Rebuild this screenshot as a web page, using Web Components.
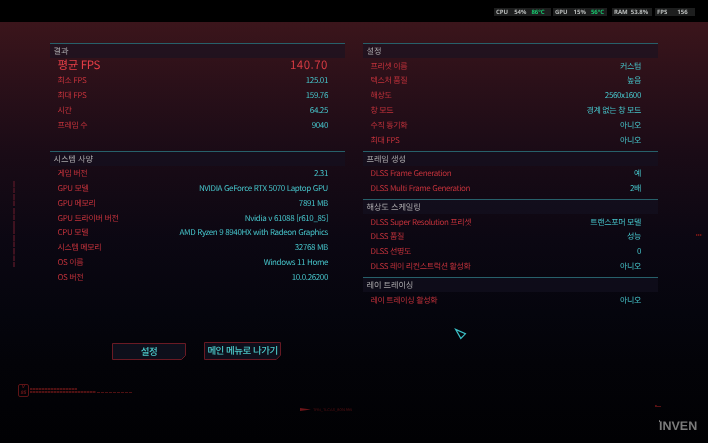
<!doctype html>
<html lang="ko"><head><meta charset="utf-8"><title>결과</title>
<style>
html,body{margin:0;background:#000}
body{width:708px;height:443px;overflow:hidden;font-family:"Noto Sans CJK KR","Noto Sans",sans-serif;text-rendering:geometricPrecision}
</style></head><body>
<template id="t-screen"><style>
:host{display:flex;flex-direction:column;width:708px;height:443px;position:relative;overflow:hidden;background:#000;filter:blur(.3px)}
.main{flex:1;min-height:0;display:flex;flex-direction:column;padding:21px 0 0 50px;background:linear-gradient(180deg,#3b151b 0,#2b1019 60px,#1a0b16 130px,#0b0712 220px,#05050d 290px,#030308 340px,#010103 421px)}
.cols{display:grid;grid-template-columns:295px 295px;column-gap:18px}
.btns{display:flex;gap:18px;padding-left:62px;margin-top:auto;margin-bottom:83px;align-items:flex-end}
</style><slot name="top"></slot><div class="main"><div class="cols"><slot name="left"></slot><slot name="right"></slot></div><div class="btns"><slot name="btn"></slot></div></div><slot></slot></template>

<template id="t-hud"><style>
:host{display:flex;height:22px;box-sizing:border-box;padding:8px 13px 0 494px;background:#000}
</style><slot></slot></template>

<template id="t-chip"><style>
:host{display:flex;height:8px;box-sizing:border-box;background:#1d1e1e;color:#b9bcbb;font:700 6px/8px "Noto Sans",sans-serif;padding:0 0 0 2px;white-space:nowrap;width:var(--w);gap:var(--g,5px);margin-left:var(--m,0)}
::slotted(b){color:#18c46d;font-weight:700}
</style><slot></slot></template>

<template id="t-sec"><style>
:host{display:block;margin-bottom:3.8px}
.h{height:15px;box-sizing:border-box;border-top:1.2px solid #27606a;background:rgba(20,18,34,.55);color:#a8a6a9;font-size:8.2px;letter-spacing:-.1px;line-height:15px;padding-left:3.5px}
:host([gap]){margin-bottom:18.6px}
</style><div class="h"><slot name="title"></slot></div><slot></slot></template>

<template id="t-row"><style>
:host{display:flex;justify-content:space-between;align-items:center;box-sizing:border-box;height:14.8px;padding:1.6px 17px 0 7.5px;font-size:8px;letter-spacing:-.37px;line-height:13px;color:#c2323b;white-space:nowrap}
::slotted([slot=v]){color:#46c4ca}
:host([big]){font-size:11.5px;letter-spacing:-.4px;color:#e63e47;padding-top:0;line-height:14.8px}
:host([big]) ::slotted([slot=v]){color:#d43a42;letter-spacing:.5px}
</style><span><slot></slot></span><slot name="v"></slot></template>

<template id="t-btn"><style>
:host{display:flex;align-items:center;justify-content:center;position:relative;box-sizing:border-box;width:var(--w);height:var(--h);color:#4ccacb;font-size:9.5px;letter-spacing:-.5px;font-weight:500;line-height:1;white-space:nowrap}
svg{position:absolute;inset:0;width:100%;height:100%}
span{position:relative}
</style><svg viewBox="0 0 74 17" preserveAspectRatio="none"><path d="M.5 .5H73.5V12.5L69.5 16.5H.5Z" fill="#0e0f1b" stroke="#6a1a24" vector-effect="non-scaling-stroke"/></svg><span><slot></slot></span></template>

<template id="t-deco"><style>
:host{position:absolute;inset:0;pointer-events:none;display:block}
.a{position:absolute}
.strip{left:12.5px;top:181px;width:2px;height:86px;background:repeating-linear-gradient(180deg,#3f1220 0 6px,#240c16 6px 7px,#3f1220 7px 12px,#0b0712 12px 13.5px)}
.badge{left:18px;top:384px;width:11px;height:13px;border:1px solid #5e1416;border-radius:2px;box-sizing:border-box;color:#6a1719;font:700 5px/5.5px "Liberation Sans",sans-serif;text-align:center;font-style:italic}
.l1{left:30px;top:388px;width:47px;height:1.5px;background:repeating-linear-gradient(90deg,#4e1113 0 2px,#2b0a0b 2px 3px)}
.l2{left:30px;top:391px;width:66px;height:1.5px;background:repeating-linear-gradient(90deg,#4e1113 0 2px,#2b0a0b 2px 3px)}
.l3{left:97px;top:391.5px;width:35px;height:1px;background:repeating-linear-gradient(90deg,#4e1113 0 3px,#0a0202 3px 4px)}
.arrow{left:300px;top:408px;width:11px;height:3px;background:#6d1518;clip-path:polygon(0 0,100% 50%,0 100%)}
.trn{left:313px;top:406.5px;font:3.8px/6px "Liberation Sans",sans-serif;color:#551214;white-space:nowrap}
.r1{left:696px;top:234px;width:6px;height:2px;background:repeating-linear-gradient(90deg,#6d1518 0 1px,#32090b 1px 2px)}
.r2{left:655px;top:405px;width:6px;height:2px;background:#5a1113;clip-path:polygon(0 0,30% 0,30% 50%,100% 50%,100% 100%,0 100%)}
.inv{left:659px;top:418px;font:700 12.5px/16px "Liberation Sans",sans-serif;color:#7b7b7b}
.dot{left:658.5px;top:420px;width:1.6px;height:1.6px;background:#8a8a8a;border-radius:50%}
svg{left:454px;top:328px}
</style>
<div class="a strip"></div>
<div class="a badge">V<br>85</div><div class="a l1"></div><div class="a l2"></div><div class="a l3"></div>
<div class="a arrow"></div><div class="a trn">TRN_TLCAS_8091995</div>
<div class="a r1"></div><div class="a r2"></div>
<svg class="a" width="14" height="13" viewBox="0 0 14 13"><path d="M1.6 1.4L11.4 5.8 6.8 10.4Z" fill="none" stroke="#3cc0c6" stroke-width="1.2"/></svg>
<div class="a inv">INVEN</div><div class="a dot"></div>
</template>

<result-screen>
  <hud-bar slot="top">
    <hud-chip style="--w:57px">CPU<span style="margin-left:1px">54%</span><b>86°C</b></hud-chip>
    <hud-chip style="--w:54px;--m:2px">GPU<span style="margin-left:1px">15%</span><b>56°C</b></hud-chip>
    <hud-chip style="--w:40px;--g:3px;--m:5px">RAM<span>53.8%</span></hud-chip>
    <hud-chip style="--w:40px;--g:10px;--m:3px">FPS<span>156</span></hud-chip>
  </hud-bar>
  <div slot="left">
    <stat-section gap><span slot="title">결과</span>
      <stat-row big>평균 FPS<span slot="v">140.70</span></stat-row>
      <stat-row>최소 FPS<span slot="v">125.01</span></stat-row>
      <stat-row>최대 FPS<span slot="v">159.76</span></stat-row>
      <stat-row>시간<span slot="v">64.25</span></stat-row>
      <stat-row>프레임 수<span slot="v">9040</span></stat-row>
    </stat-section>
    <stat-section><span slot="title">시스템 사양</span>
      <stat-row>게임 버전<span slot="v">2.31</span></stat-row>
      <stat-row>GPU 모델<span slot="v">NVIDIA GeForce RTX 5070 Laptop GPU</span></stat-row>
      <stat-row>GPU 메모리<span slot="v">7891 MB</span></stat-row>
      <stat-row>GPU 드라이버 버전<span slot="v">Nvidia v 61088 [r610_85]</span></stat-row>
      <stat-row>CPU 모델<span slot="v">AMD Ryzen 9 8940HX with Radeon Graphics</span></stat-row>
      <stat-row>시스템 메모리<span slot="v">32768 MB</span></stat-row>
      <stat-row>OS 이름<span slot="v">Windows 11 Home</span></stat-row>
      <stat-row>OS 버전<span slot="v">10.0.26200</span></stat-row>
    </stat-section>
  </div>
  <div slot="right">
    <stat-section><span slot="title">설정</span>
      <stat-row>프리셋 이름<span slot="v">커스텀</span></stat-row>
      <stat-row>텍스처 품질<span slot="v">높음</span></stat-row>
      <stat-row>해상도<span slot="v">2560x1600</span></stat-row>
      <stat-row>창 모드<span slot="v">경계 없는 창 모드</span></stat-row>
      <stat-row>수직 동기화<span slot="v">아니오</span></stat-row>
      <stat-row>최대 FPS<span slot="v">아니오</span></stat-row>
    </stat-section>
    <stat-section><span slot="title">프레임 생성</span>
      <stat-row>DLSS Frame Generation<span slot="v">예</span></stat-row>
      <stat-row>DLSS Multi Frame Generation<span slot="v">2배</span></stat-row>
    </stat-section>
    <stat-section><span slot="title">해상도 스케일링</span>
      <stat-row>DLSS Super Resolution 프리셋<span slot="v">트랜스포머 모델</span></stat-row>
      <stat-row>DLSS 품질<span slot="v">성능</span></stat-row>
      <stat-row>DLSS 선명도<span slot="v">0</span></stat-row>
      <stat-row>DLSS 레이 리컨스트럭션 활성화<span slot="v">아니오</span></stat-row>
    </stat-section>
    <stat-section><span slot="title">레이 트레이싱</span>
      <stat-row>레이 트레이싱 활성화<span slot="v">아니오</span></stat-row>
    </stat-section>
  </div>
  <cut-button slot="btn" style="--w:74px;--h:17px">설정</cut-button>
  <cut-button slot="btn" style="--w:77px;--h:18px">메인 메뉴로 나가기</cut-button>
  <hud-deco></hud-deco>
</result-screen>
<script>
const reg=(n,t)=>customElements.define(n,class extends HTMLElement{constructor(){super();this.attachShadow({mode:'open'}).appendChild(document.getElementById(t).content.cloneNode(true))}});
reg('result-screen','t-screen');reg('hud-bar','t-hud');reg('hud-chip','t-chip');reg('stat-section','t-sec');reg('stat-row','t-row');reg('cut-button','t-btn');reg('hud-deco','t-deco');
</script>
</body></html>
